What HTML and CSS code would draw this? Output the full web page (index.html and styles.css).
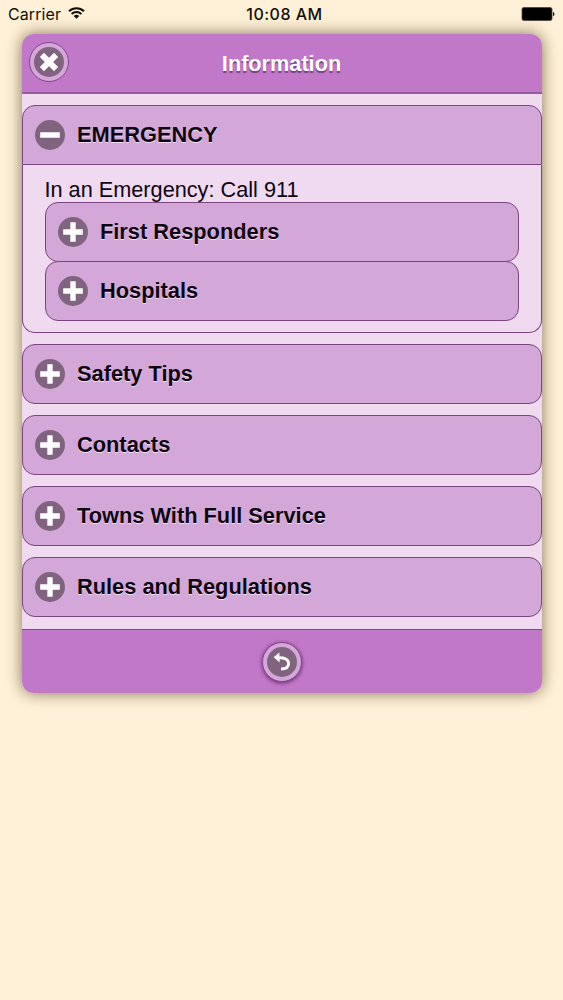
FILE: index.html
```html
<!DOCTYPE html>
<html>
<head>
  <meta charset="utf-8">
  <title>Information</title>
  <link rel="stylesheet" href="styles.css">
</head>
<body>
<div class="status-bar">
  <div class="carrier">
    <span>Carrier</span>
    <svg class="wifi" width="17" height="12" viewBox="0 0 17 12">
      <path d="M1 4.300a10.800 10.800 0 0 1 15 0M3.600 7a7 7 0 0 1 9.800 0" fill="none" stroke="#120e06" stroke-width="1.900"/>
      <path d="M8.500 11.800L5.700 9a4 4 0 0 1 5.600 0z" fill="#120e06"/>
    </svg>
  </div>
  <span class="clock">10:08 AM</span>
  <div class="battery">
    <svg width="34" height="14" viewBox="0 0 34 14">
      <rect x="1" y=".5" width="30" height="13" rx="1.800" fill="#000" stroke="#4a463c" stroke-width=".8"/>
      <path d="M32 5v4.200q1.500-.5 1.500-2.100t-1.500-2.100z" fill="#120e06"/>
    </svg>
  </div>
</div>

<div class="popup">
  <div class="header">
    <a class="btn-round">
      <svg class="icon" viewBox="0 0 30 30"><circle cx="15" cy="15" r="15"/><path d="M7.900 7.900l14.200 14.200M22.100 7.900l-14.200 14.200" stroke-width="5.800"/></svg>
    </a>
    <h1>Information</h1>
  </div>

  <div class="content">
    <div class="collapsible open">
      <h2 class="heading">
        <svg class="icon" viewBox="0 0 30 30"><circle cx="15" cy="15" r="15"/><path d="M5.200 15h19.600" stroke-width="5.400"/></svg>
        <span>EMERGENCY</span>
      </h2>
      <div class="panel">
        <p>In an Emergency: Call 911</p>
        <h3 class="heading">
          <svg class="icon" viewBox="0 0 30 30"><circle cx="15" cy="15" r="15"/><path d="M5.200 15h19.600M15 5.200v19.600" stroke-width="5.400"/></svg>
          <span>First Responders</span>
        </h3>
        <h3 class="heading">
          <svg class="icon" viewBox="0 0 30 30"><circle cx="15" cy="15" r="15"/><path d="M5.200 15h19.600M15 5.200v19.600" stroke-width="5.400"/></svg>
          <span>Hospitals</span>
        </h3>
      </div>
    </div>

    <div class="collapsible">
      <h2 class="heading">
        <svg class="icon" viewBox="0 0 30 30"><circle cx="15" cy="15" r="15"/><path d="M5.200 15h19.600M15 5.200v19.600" stroke-width="5.400"/></svg>
        <span>Safety Tips</span>
      </h2>
    </div>

    <div class="collapsible">
      <h2 class="heading">
        <svg class="icon" viewBox="0 0 30 30"><circle cx="15" cy="15" r="15"/><path d="M5.200 15h19.600M15 5.200v19.600" stroke-width="5.400"/></svg>
        <span>Contacts</span>
      </h2>
    </div>

    <div class="collapsible">
      <h2 class="heading">
        <svg class="icon" viewBox="0 0 30 30"><circle cx="15" cy="15" r="15"/><path d="M5.200 15h19.600M15 5.200v19.600" stroke-width="5.400"/></svg>
        <span>Towns With Full Service</span>
      </h2>
    </div>

    <div class="collapsible">
      <h2 class="heading">
        <svg class="icon" viewBox="0 0 30 30"><circle cx="15" cy="15" r="15"/><path d="M5.200 15h19.600M15 5.200v19.600" stroke-width="5.400"/></svg>
        <span>Rules and Regulations</span>
      </h2>
    </div>
  </div>

  <div class="footer">
    <a class="btn-round raised">
      <svg class="icon" viewBox="0 0 30 30"><circle cx="15" cy="15" r="15"/><path d="M11 10.800c6.500-.3 10.600 1.700 10.600 5.800c0 3.600-2.900 5.400-7.600 5.400" stroke-width="2.900"/><path class="fill" d="M6.700 10.200l5.600-4.600l.4 9.800z"/></svg>
    </a>
  </div>
</div>
</body>
</html>
```

FILE: styles.css
```css
body { margin: 0; min-height: 100vh; background: #fff1d7; font-family: "Liberation Sans", Arial, sans-serif; font-size: 21.7px; color: #0c0410; }
h1, h2, h3, p { margin: 0; }

.status-bar { display: grid; grid-template-columns: 1fr auto 1fr; align-items: center; height: 28px; padding: 0 8px; font-family: Inter, sans-serif; font-size: 16px; color: #120e06; }
.carrier { display: flex; align-items: center; gap: 7px; letter-spacing: 0.1px; }
.wifi { margin-top: -2px; }
.clock { font-weight: 500; margin-left: 6px; letter-spacing: 0.5px; }
.battery { display: flex; justify-content: flex-end; }

.popup { margin: 6px 21.500px 0; border-radius: 12px; background: #f0daf0; box-shadow: 0 0 16px rgba(60, 45, 15, 0.65); overflow: hidden; }

.header { display: grid; grid-template-columns: 40px 1fr 40px; align-items: center; box-sizing: border-box; height: 60px; padding: 0 7px; background: #c278c8; border-bottom: 2px solid #9a5aa2; }
.header h1 { text-align: center; font-size: 21.7px; font-weight: bold; color: #fff; text-shadow: 0 1.500px 1px #754080; padding-top: 2px; }
.header .btn-round { margin-top: -3px; }

.content { display: flex; flex-direction: column; gap: 11px; padding: 10.500px 0 12px; }
.heading { display: flex; align-items: center; gap: 12.500px; box-sizing: border-box; height: 60px; padding: 0 12px; font-size: 21.8px; font-weight: bold; background: #d3a7d8; border: 1px solid #7a4580; border-radius: 13px; text-shadow: 0 1px 0 #f2dcf4; }
.heading span { padding-top: 1px; }
.icon { display: block; flex: none; width: 30px; height: 30px; }
.icon circle { fill: #80647f; }
.icon path { fill: none; stroke: #fff; }
.icon .fill { fill: #fff; stroke: none; }

.open .heading { border-radius: 13px 13px 0 0; }
.panel { padding: 12px 22px 11px; border: 1px solid #7a4580; border-top: 0; border-radius: 0 0 13px 13px; }
.panel p { line-height: 25px; }
.open .panel .heading { border-radius: 13px; }
.panel .heading + .heading { margin-top: -1px; }

.footer { display: flex; justify-content: center; align-items: center; box-sizing: border-box; height: 64px; padding-top: 1px; background: #c278c8; border-top: 1px solid #85458e; }
.btn-round { display: flex; align-items: center; justify-content: center; box-sizing: border-box; width: 40px; height: 40px; border: 1px solid #85458e; border-radius: 50%; background: #d3a7d8; }
.raised { box-shadow: 0 1px 4px rgba(60, 10, 70, 0.7); }
```
